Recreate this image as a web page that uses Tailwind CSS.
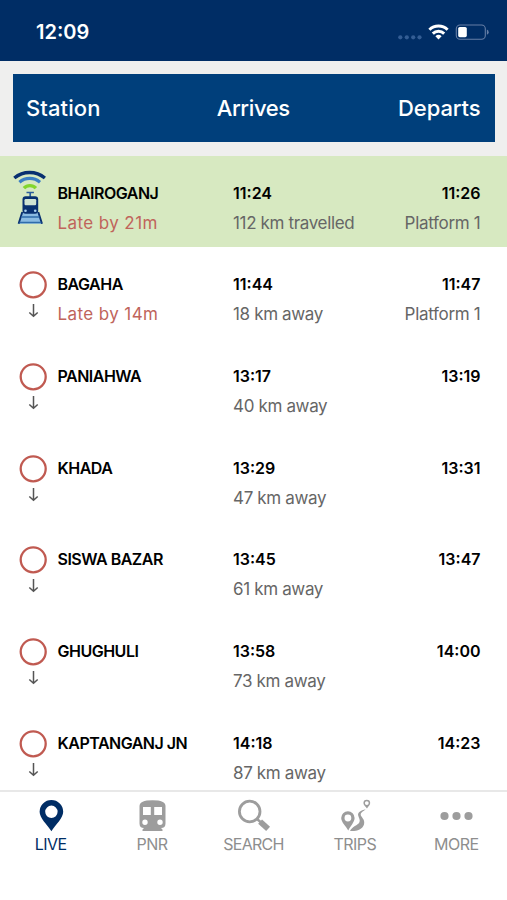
<!doctype html>
<html lang="en">
<head>
  <meta charset="UTF-8">
  <meta name="viewport" content="width=device-width, initial-scale=1.0">
  <title>Live train status</title>
  <script src="https://cdn.jsdelivr.net/npm/@tailwindcss/browser@4"></script>
</head>
<body class="flex h-[900px] w-[507px] flex-col overflow-hidden bg-white font-['Inter','Liberation_Sans',sans-serif] text-black">

  <!-- Status bar -->
  <header class="flex h-[60.5px] shrink-0 items-center justify-between bg-[#002d65] pt-[4px] pl-[36px] pr-[18px] text-white">
    <span class="text-[20px] font-semibold">12:09</span>
    <svg class="h-[20px] w-[92px]" viewBox="397 22 92 20" aria-hidden="true">
      <g fill="#335d94">
        <circle cx="400.3" cy="37.3" r="2.1" /><circle cx="406.8" cy="37.3" r="2.1" />
        <circle cx="413.2" cy="37.3" r="2.1" /><circle cx="419.5" cy="37.3" r="2.1" />
      </g>
      <g fill="none" stroke="#fff" stroke-width="3">
        <path d="M429.4 29.8a13 13 0 0 1 18.2 0" />
        <path d="M432.8 33.6a8.2 8.2 0 0 1 11.4 0" />
      </g>
      <path d="M435.4 36.2a4.5 4.5 0 0 1 6.2 0l-3.1 3.3z" fill="#fff" />
      <rect x="456.3" y="25" width="29" height="14.2" rx="3.8" fill="none" stroke="#667fa6" stroke-width="1.1" />
      <rect x="458.2" y="27" width="8.6" height="10.2" rx="1.6" fill="#fff" />
      <path d="M486.9 29.6q1.8 .7 1.8 2.6t-1.8 2.6z" fill="#667fa6" />
    </svg>
  </header>

  <!-- Column headings -->
  <div class="h-[95px] shrink-0 bg-[#efefee] pt-[13.5px] pl-[13px] pr-[12.5px]">
    <div class="grid h-[67.5px] grid-cols-3 items-center bg-[#003f7b] pt-[2px] pl-[13px] pr-[14px] text-[22px] font-medium text-white">
      <span class="tracking-[0.1px]">Station</span>
      <span class="text-center tracking-[-0.4px]">Arrives</span>
      <span class="text-right tracking-[-0.1px]">Departs</span>
    </div>
  </div>

  <!-- Stops -->
  <main id="stops" class="min-h-0 flex-1 overflow-hidden"></main>

  <!-- Tab bar -->
  <nav class="grid h-[110px] shrink-0 grid-cols-5 border-t-2 border-[#e8e8e8] bg-white text-center text-[16px] leading-[20px] tracking-[-0.5px] text-[#8e8e8e]">
    <a class="flex flex-col items-center pt-[6px] text-[#002d65]">
      <svg class="h-[36px] w-[36px]" viewBox="33 798 36 36" aria-hidden="true">
        <path fill="currentColor" fill-rule="evenodd" d="M51.4 800a11.8 11.8 0 0 1 11.8 11.8c0 6-7.6 13.2-11.8 19.4c-4.2-6.2-11.8-13.4-11.8-19.4A11.8 11.8 0 0 1 51.4 800zm0 5.600a6.200 6.200 0 1 0 0 12.400a6.200 6.200 0 0 0 0-12.400z" />
      </svg>
      <span>LIVE</span>
    </a>
    <a class="flex flex-col items-center pt-[6px]">
      <svg class="h-[36px] w-[36px]" viewBox="134.5 798 36 36" aria-hidden="true">
        <path fill="#9d9d9d" fill-rule="evenodd" d="M140 806q0-5.800 13-5.800t13 5.800v17.500q0 4.500-4.500 4.500l1.500 1.500v1.500h-20v-1.500l1.500-1.500q-4.500 0-4.500-4.500zM143.500 807v8h7.800v-8zM154.700 807v8h7.800v-8zM145.500 819.600a2.700 2.700 0 1 0 0 5.400a2.700 2.700 0 0 0 0-5.400zM160.500 819.600a2.700 2.700 0 1 0 0 5.400a2.700 2.700 0 0 0 0-5.400z" />
      </svg>
      <span>PNR</span>
    </a>
    <a class="flex flex-col items-center pt-[6px]">
      <svg class="h-[36px] w-[36px]" viewBox="235.500 798 36 36" fill="none" stroke="#9d9d9d" aria-hidden="true">
        <circle cx="250.200" cy="811.500" r="10.300" stroke-width="2.800" />
        <path d="M257.500 819l3.500 3" stroke-width="2.400" />
        <path d="M260.600 821.600l8 7.200" stroke-width="5.800" />
      </svg>
      <span class="tracking-[-0.7px]">SEARCH</span>
    </a>
    <a class="flex flex-col items-center pt-[6px]">
      <svg class="h-[36px] w-[36px]" viewBox="337.500 798 36 36" fill="#9d9d9d" aria-hidden="true">
        <path fill-rule="evenodd" d="M348.400 811.300a6.700 6.700 0 0 1 6.700 6.700c0 4-4.200 8.300-6.300 12.400c-2.300-4-7.100-8.400-7.100-12.400a6.700 6.700 0 0 1 6.700-6.700zm0 3.300a3.400 3.400 0 1 0 0 6.800a3.400 3.400 0 0 0 0-6.800z" />
        <path fill-rule="evenodd" d="M367.300 799.700a3.400 3.400 0 0 1 3.400 3.400c0 2-2 3.300-3.200 5.500c-1.500-2.200-3.600-3.500-3.600-5.500a3.400 3.400 0 0 1 3.400-3.400zm0 1.500a1.900 1.900 0 1 0 0 3.800a1.900 1.900 0 0 0 0-3.800z" />
        <path d="M366.300 809.300C361 810.500 358 812.500 358.700 815.500C359.500 818.500 361 820 359.800 822.500C358.500 825.200 352.500 826.500 350.500 831C357 831.500 363 829.500 364.500 824.500C366 819 361 817 361.200 814.500C361.500 812 364.500 811 366.300 809.300z" />
      </svg>
      <span>TRIPS</span>
    </a>
    <a class="flex flex-col items-center pt-[6px]">
      <svg class="h-[36px] w-[36px]" viewBox="438.500 798 36 36" fill="#9d9d9d" aria-hidden="true">
        <circle cx="445" cy="816" r="4.100" /><circle cx="457" cy="816" r="4.100" /><circle cx="469" cy="816" r="4.100" />
      </svg>
      <span>MORE</span>
    </a>
  </nav>

  <!-- Marker for the stop where the train is now -->
  <template id="train-icon">
    <svg class="mt-[13px] ml-[12px] h-[57px] w-[36px]" viewBox="12 168 36 57" fill="none" aria-hidden="true">
      <path d="M14.300 177a24 24 0 0 1 30.600 0" stroke="#083070" stroke-width="3.400" />
      <path d="M19.400 181.200a16 16 0 0 1 20.600 0" stroke="#3b7fc4" stroke-width="3.200" />
      <path d="M23.900 187.200a8.300 8.300 0 0 1 12 0" stroke="#83d62c" stroke-width="3.400" />
      <path d="M26.500 191.500h7.400M30.200 191.500v5" stroke="#2a5d9c" stroke-width="1.700" />
      <path d="M21.800 212L18.500 222.700h23.800L38.800 212z" fill="#8abbe2" />
      <path d="M22.300 211L18.600 222.700M38.300 211L42 222.700" stroke="#083070" stroke-width="1.900" />
      <path d="M21.200 216h18.200M19.500 221.500h21.800" stroke="#2f6cab" stroke-width="1.500" />
      <rect x="22.500" y="195.200" width="15.700" height="17.600" rx="3.200" fill="#083070" />
      <rect x="24.500" y="198" width="11.700" height="6.300" rx="1.200" fill="#cfe3d2" />
      <circle cx="25.500" cy="209.700" r="1.300" fill="#a9d2ee" /><circle cx="35.200" cy="209.700" r="1.300" fill="#a9d2ee" />
    </svg>
  </template>

  <!-- Marker for the stops ahead -->
  <template id="stop-icon">
    <svg class="mt-[22px] ml-[18px] h-[52px] w-[30px]" viewBox="0 0 30 52" fill="none" aria-hidden="true">
      <circle cx="15.200" cy="15.800" r="12.500" stroke="#c05a51" stroke-width="2.300" />
      <path d="M15.500 35v12M11.300 43.500l4.200 3.800l4.200-3.800" stroke="#555" stroke-width="1.500" />
    </svg>
  </template>

  <script>
    const stops = [
      { name: 'BHAIROGANJ', late: 'Late by 21m', arrives: '11:24', distance: '112 km travelled', departs: '11:26', platform: 'Platform 1', current: true },
      { name: 'BAGAHA', late: 'Late by 14m', arrives: '11:44', distance: '18 km away', departs: '11:47', platform: 'Platform 1' },
      { name: 'PANIAHWA', arrives: '13:17', distance: '40 km away', departs: '13:19' },
      { name: 'KHADA', arrives: '13:29', distance: '47 km away', departs: '13:31' },
      { name: 'SISWA BAZAR', arrives: '13:45', distance: '61 km away', departs: '13:47' },
      { name: 'GHUGHULI', arrives: '13:58', distance: '73 km away', departs: '14:00' },
      { name: 'KAPTANGANJ JN', arrives: '14:18', distance: '87 km away', departs: '14:23' }
    ];

    const icon = id => document.getElementById(id).innerHTML;

    document.getElementById('stops').innerHTML = stops.map(stop => `
      <div class="grid h-[91.7px] grid-cols-[57.5px_175.5px_1fr_auto] pr-[26.5px] ${stop.current ? 'bg-[#d7e9c1]' : 'bg-white'}">
        <div>${icon(stop.current ? 'train-icon' : 'stop-icon')}</div>
        <div class="pt-[22px] leading-[30px]">
          <p class="text-[16px] font-semibold tracking-[-0.5px]">${stop.name}</p>
          <p class="text-[17px] tracking-[0.4px] text-[#c0645b]">${stop.late ?? ''}</p>
        </div>
        <div class="pt-[22px] leading-[30px]">
          <p class="text-[16px] font-semibold">${stop.arrives}</p>
          <p class="text-[17px] tracking-[-0.35px] text-[#666]">${stop.distance}</p>
        </div>
        <div class="pt-[22px] text-right leading-[30px]">
          <p class="text-[16px] font-semibold">${stop.departs}</p>
          <p class="text-[17px] tracking-[-0.3px] text-[#666]">${stop.platform ?? ''}</p>
        </div>
      </div>`).join('');
  </script>
</body>
</html>
